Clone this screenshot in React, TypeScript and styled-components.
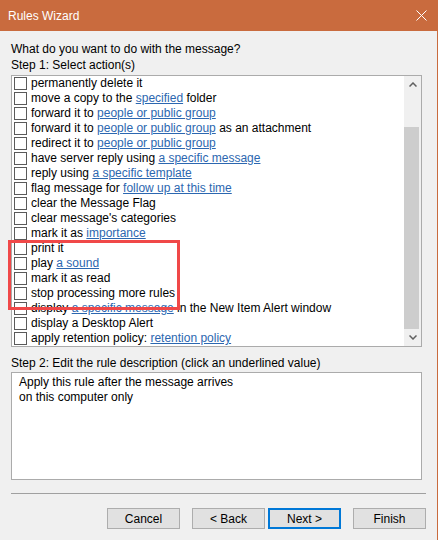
import React from 'react'
import styled, { createGlobalStyle } from 'styled-components'

const GlobalStyle = createGlobalStyle`
    html, body {
        margin: 0;
        padding: 0;
        background: #f0f0f0;
    }
    body {
        font-family: "Liberation Sans", Arial, sans-serif;
        font-size: 12px;
        color: #000000;
    }
`

const Window = styled.div`
    position: relative;
    width: 438px;
    height: 540px;
    box-sizing: border-box;
    border-right: 1px solid #c96b3e;
    background-color: #f0f0f0;
    display: flex;
    flex-direction: column;
    overflow: hidden;
`

const TitleBar = styled.div`
    height: 31px;
    flex: 0 0 31px;
    background-color: #c96b3e;
    display: flex;
    align-items: center;
    justify-content: space-between;
    padding: 0 10px 0 8px;
    color: #ffffff;
    font-size: 12px;
`

const CloseIcon = styled.svg`
    width: 11px;
    height: 11px;
    display: block;
`

const Content = styled.div`
    display: flex;
    flex-direction: column;
    padding: 10px 11px 0 11px;
`

const Label = styled.div<{ $top?: number }>`
    line-height: 16px;
    height: 16px;
    margin-top: ${p => p.$top || 0}px;
    white-space: nowrap;
`

const ListBox = styled.div`
    margin-top: 2px;
    width: 411px;
    height: 272px;
    box-sizing: border-box;
    border: 1px solid #ababab;
    background-color: #ffffff;
    display: flex;
`

const Rows = styled.div`
    flex: 1;
    display: flex;
    flex-direction: column;
    overflow: hidden;
`

const Row = styled.div`
    height: 15px;
    flex: 0 0 15px;
    display: flex;
    align-items: center;
    padding-left: 2px;
    white-space: nowrap;
    line-height: 15px;
`

const CheckBox = styled.span`
    width: 13px;
    height: 13px;
    box-sizing: border-box;
    border: 1px solid #5a5a5a;
    background-color: #ffffff;
    margin-right: 4px;
    flex: 0 0 13px;
`

const Link = styled.span`
    color: #2c67b0;
    text-decoration: underline;
    text-underline-offset: 1px;
`

const ScrollBar = styled.div`
    width: 17px;
    flex: 0 0 17px;
    display: flex;
    flex-direction: column;
    background-color: #f0f0f0;
`

const ScrollArrow = styled.div`
    height: 17px;
    flex: 0 0 17px;
    display: flex;
    align-items: center;
    justify-content: center;
`

const ScrollTrack = styled.div<{ $offset: number }>`
    flex: 1;
    padding-top: ${p => p.$offset}px;
    box-sizing: border-box;
`

const ScrollThumb = styled.div<{ $size: number }>`
    height: ${p => p.$size}px;
    margin-right: 2px;
    background-color: #cdcdcd;
`

const DescriptionBox = styled.div`
    margin-top: 1px;
    width: 411px;
    height: 108px;
    box-sizing: border-box;
    border: 1px solid #ababab;
    background-color: #ffffff;
    padding: 2px 7px;
    line-height: 15px;
`

const Separator = styled.div`
    margin-top: 13px;
    height: 1px;
    width: 415px;
    background-color: #a0a0a0;
`

const ButtonBar = styled.div`
    margin-top: 14px;
    display: flex;
    justify-content: flex-end;
    width: 415px;
`

const Button = styled.button<{ $focused?: boolean; $gap?: number }>`
    width: 73px;
    height: 21px;
    box-sizing: border-box;
    margin-left: ${p => p.$gap || 0}px;
    padding: 0;
    background-color: #e1e1e1;
    border: ${p => (p.$focused ? '2px solid #0078d7' : '1px solid #adadad')};
    font-family: inherit;
    font-size: 12px;
    color: #000000;
    line-height: 1;
`

const Highlight = styled.div`
    position: absolute;
    left: 8px;
    top: 240px;
    width: 172px;
    height: 70px;
    box-sizing: border-box;
    border: 3px solid #f04848;
    pointer-events: none;
`

type Part = string | { link: string }

const actions: Part[][] = [
    ['permanently delete it'],
    ['move a copy to the ', { link: 'specified' }, ' folder'],
    ['forward it to ', { link: 'people or public group' }],
    ['forward it to ', { link: 'people or public group' }, ' as an attachment'],
    ['redirect it to ', { link: 'people or public group' }],
    ['have server reply using ', { link: 'a specific message' }],
    ['reply using ', { link: 'a specific template' }],
    ['flag message for ', { link: 'follow up at this time' }],
    ['clear the Message Flag'],
    ["clear message's categories"],
    ['mark it as ', { link: 'importance' }],
    ['print it'],
    ['play ', { link: 'a sound' }],
    ['mark it as read'],
    ['stop processing more rules'],
    ['display ', { link: 'a specific message' }, ' in the New Item Alert window'],
    ['display a Desktop Alert'],
    ['apply retention policy: ', { link: 'retention policy' }],
]

const Chevron = ({ up }: { up?: boolean }) => (
    <svg width="8" height="5" viewBox="0 0 8 5">
        <path
            d={up ? 'M0.5 4.5 L4 1 L7.5 4.5' : 'M0.5 0.5 L4 4 L7.5 0.5'}
            fill="none"
            stroke="#606060"
            strokeWidth="1.5"
        />
    </svg>
)

const App = () => {
    return (
        <>
            <GlobalStyle />
            <Window>
                <TitleBar>
                    <span>Rules Wizard</span>
                    <CloseIcon viewBox="0 0 11 11">
                        <path d="M0.5 0.5 L10.5 10.5 M10.5 0.5 L0.5 10.5" stroke="#ffffff" strokeWidth="1" />
                    </CloseIcon>
                </TitleBar>
                <Content>
                    <Label>What do you want to do with the message?</Label>
                    <Label>Step 1: Select action(s)</Label>
                    <ListBox>
                        <Rows>
                            {actions.map((parts, i) => (
                                <Row key={i}>
                                    <CheckBox />
                                    <span>
                                        {parts.map((p, j) =>
                                            typeof p === 'string' ? (
                                                <React.Fragment key={j}>{p}</React.Fragment>
                                            ) : (
                                                <Link key={j}>{p.link}</Link>
                                            )
                                        )}
                                    </span>
                                </Row>
                            ))}
                        </Rows>
                        <ScrollBar>
                            <ScrollArrow>
                                <Chevron up />
                            </ScrollArrow>
                            <ScrollTrack $offset={34}>
                                <ScrollThumb $size={202} />
                            </ScrollTrack>
                            <ScrollArrow>
                                <Chevron />
                            </ScrollArrow>
                        </ScrollBar>
                    </ListBox>
                    <Label $top={8}>Step 2: Edit the rule description (click an underlined value)</Label>
                    <DescriptionBox>
                        Apply this rule after the message arrives
                        <br />
                        on this computer only
                    </DescriptionBox>
                    <Separator />
                    <ButtonBar>
                        <Button type="button">Cancel</Button>
                        <Button type="button" $gap={12}>&lt; Back</Button>
                        <Button type="button" $gap={3} $focused>Next &gt;</Button>
                        <Button type="button" $gap={12}>Finish</Button>
                    </ButtonBar>
                </Content>
                <Highlight />
            </Window>
        </>
    )
}

export default App
